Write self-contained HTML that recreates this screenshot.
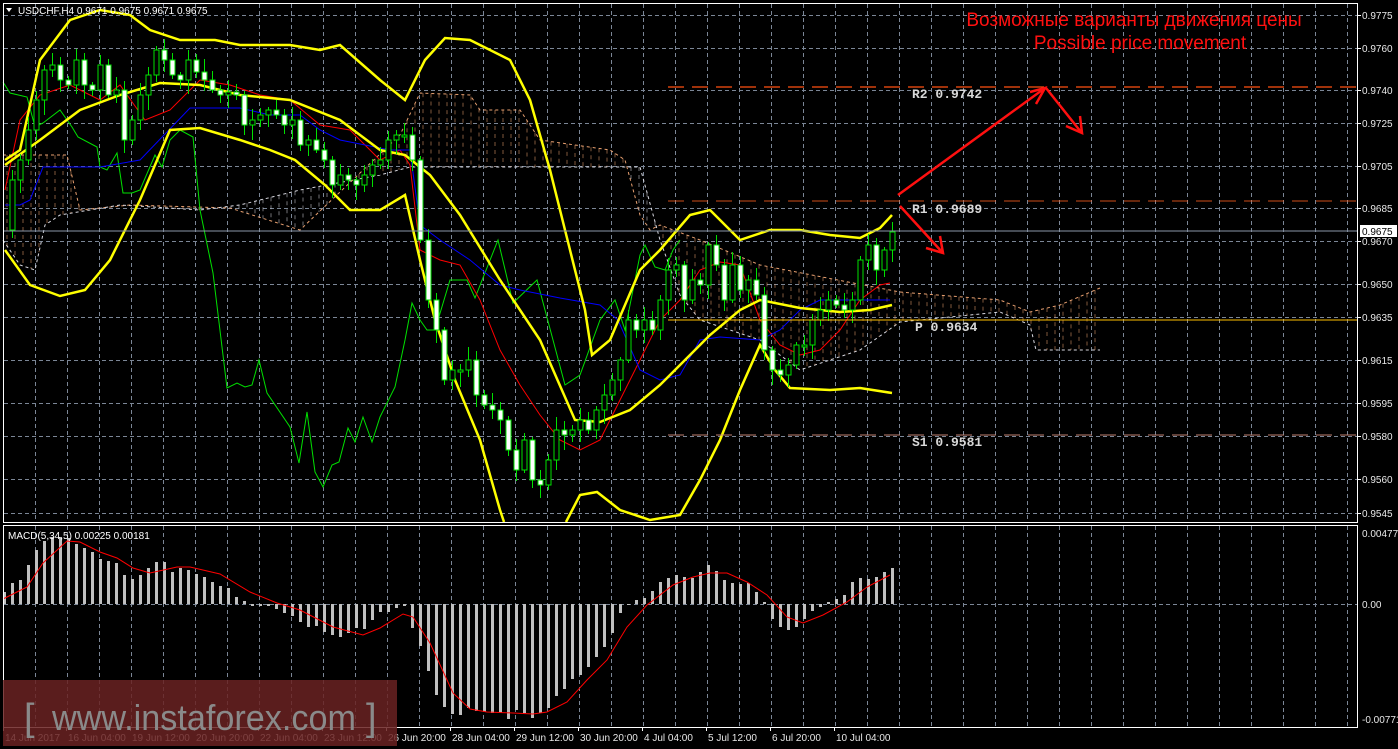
<!DOCTYPE html>
<html><head><meta charset="utf-8"><style>
html,body{margin:0;padding:0;background:#000;width:1398px;height:749px;overflow:hidden}
svg{display:block}
text{font-family:"Liberation Sans","DejaVu Sans",sans-serif}
text.mono{font-family:"Liberation Mono","DejaVu Sans Mono",monospace;font-weight:bold}
</style></head><body>
<svg id="s" width="1398" height="749" xmlns="http://www.w3.org/2000/svg">
<rect width="1398" height="749" fill="#000"/>
<g id="grid"></g>
<g id="cloud"></g>
<g id="lines"></g>
<g id="cand"></g>
<g id="macd"></g>
<line x1="668" y1="87" x2="1357" y2="87" stroke="#ff5010" stroke-width="1.3" stroke-dasharray="16,8"/>
<line x1="668" y1="201" x2="1357" y2="201" stroke="#ff6020" stroke-width="1" stroke-dasharray="16,8" opacity=".8"/>
<line x1="668" y1="320" x2="1357" y2="320" stroke="#ffc000" stroke-width="1"/>
<line x1="668" y1="435" x2="1357" y2="435" stroke="#c08070" stroke-width="1" stroke-dasharray="16,8"/>
<line x1="3" y1="231" x2="1357" y2="231" stroke="#8a96a8" stroke-width="1"/>
<g font-size="13" fill="#d8d8d8">
<text class="mono" x="912" y="98">R2 0.9742</text>
<text class="mono" x="912" y="213">R1 0.9689</text>
<text class="mono" x="915" y="331">P  0.9634</text>
<text class="mono" x="912" y="446">S1 0.9581</text>
</g>
<g stroke="#ff1010" stroke-width="2.5" fill="none">
<line x1="898" y1="195" x2="1045" y2="88"/>
<polyline points="1030,92 1045,88 1036,104"/>
<line x1="1046" y1="88" x2="1081" y2="132"/>
<polyline points="1080,116 1082,133 1066,126"/>
<line x1="900" y1="206" x2="942" y2="252"/>
<polyline points="940,236 943,253 926,248"/>
</g>
<text x="1134" y="26" font-size="19" fill="#ff1010" text-anchor="middle">Возможные варианты движения цены</text>
<text x="1140" y="49" font-size="19" fill="#ff1010" text-anchor="middle">Possible price movement</text>
<rect x="3.5" y="3.5" width="1354" height="519" fill="none" stroke="#fff" stroke-width="1"/>
<rect x="3.5" y="525.5" width="1354" height="202" fill="none" stroke="#fff" stroke-width="1"/>
<g id="axis" font-size="10" fill="#e8e8e8"></g>
<polygon points="6,8 12,8 9,12" fill="#fff"/>
<text x="18" y="14" font-size="10" fill="#fff">USDCHF,H4  0.9671 0.9675 0.9671 0.9675</text>
<text x="8" y="539" font-size="10" fill="#fff">MACD(5,34,5) 0.00225 0.00181</text>
<rect x="1360" y="225" width="37" height="12" fill="#fff"/>
<text x="1362" y="235" font-size="10" fill="#000">0.9675</text>
<rect x="3" y="680" width="394" height="66" fill="#6a2222" opacity=".85"/>
<text x="24" y="730" font-size="38" fill="#8a8a8a">[</text>
<text x="52" y="730" font-size="36" fill="#8a8a8a" textLength="304" lengthAdjust="spacingAndGlyphs">www.instaforex.com</text>
<text x="366" y="730" font-size="38" fill="#8a8a8a">]</text>
</svg>
<script>
var NS="http://www.w3.org/2000/svg";
function el(p,t,a){var e=document.createElementNS(NS,t);for(var k in a)e.setAttribute(k,a[k]);document.getElementById(p).appendChild(e);return e;}
function interp(pts,x){if(x<=pts[0][0])return pts[0][1];for(var i=1;i<pts.length;i++){if(x<=pts[i][0]){var a=pts[i-1],b=pts[i];return a[1]+(b[1]-a[1])*(x-a[0])/(b[0]-a[0]);}}return pts[pts.length-1][1];}
function pl(p,pts,c,w,d){var a={points:pts.map(function(q){return q.join(',')}).join(' '),fill:'none',stroke:c,'stroke-width':w};if(d)a['stroke-dasharray']=d;el(p,'polyline',a);}
var prices=[["0.9775",15],["0.9760",48],["0.9740",90],["0.9725",123],["0.9705",166],["0.9685",208],["0.9670",241],["0.9650",284],["0.9635",317],["0.9615",360],["0.9595",403],["0.9580",436],["0.9560",479],["0.9545",513]];
prices.forEach(function(p){if(p[1]>10)el('grid','line',{x1:4,x2:1357,y1:p[1]+.5,y2:p[1]+.5,stroke:'#7b8696','stroke-dasharray':'4,3','stroke-width':1});
var t=el('axis','text',{x:1362,y:p[1]+4});t.textContent=p[0];el('axis','line',{x1:1357,x2:1361,y1:p[1]+.5,y2:p[1]+.5,stroke:'#fff'});});
for(var x=35;x<1357;x+=32){el('grid','line',{x1:x+.5,x2:x+.5,y1:4,y2:522,stroke:'#7b8696','stroke-dasharray':'4,3'});el('grid','line',{x1:x+.5,x2:x+.5,y1:526,y2:727,stroke:'#7b8696','stroke-dasharray':'4,3'});}
el('grid','line',{x1:4,x2:1357,y1:604.5,y2:604.5,stroke:'#7b8696','stroke-dasharray':'4,3'});
[["0.00477",537],["0.00",608],["-0.00771",723]].forEach(function(p){var t=el('axis','text',{x:1362,y:p[1]});t.textContent=p[0];});
var tl=[["14 Jun 2017",3],["16 Jun 04:00",66],["19 Jun 12:00",130],["20 Jun 20:00",194],["22 Jun 04:00",258],["23 Jun 12:00",322],["26 Jun 20:00",386],["28 Jun 04:00",450],["29 Jun 12:00",514],["30 Jun 20:00",578],["4 Jul 04:00",642],["5 Jul 12:00",706],["6 Jul 20:00",770],["10 Jul 04:00",834]];
tl.forEach(function(p){var t=el('axis','text',{x:p[1]+2,y:741});t.textContent=p[0];el('axis','line',{x1:p[1]+.5,x2:p[1]+.5,y1:727,y2:731,stroke:'#fff'});});
var L1=[[3,155],[67,155],[80,210],[130,205],[230,208],[300,230],[400,135],[420,93],[470,95],[480,110],[520,110],[540,140],[610,150],[625,160],[640,215],[650,230],[660,225],[700,240],[760,265],[900,292],[1000,300],[1030,312],[1060,305],[1100,288]];
var L2=[[3,240],[20,265],[35,270],[45,225],[60,215],[90,210],[120,205],[200,210],[240,205],[300,190],[380,175],[410,167],[640,167],[660,240],[680,295],[700,320],[760,340],[800,370],[860,350],[900,322],[1000,312],[1030,325],[1036,350],[1100,350]];
pl('cloud',L1,'#e8a070',1,'3,3');pl('cloud',L2,'#d8d8e0',1,'3,3');
for(var x=7;x<=1100;x+=8){var a=interp(L1,x),b=interp(L2,x);el('cloud','line',{x1:x,x2:x,y1:Math.min(a,b),y2:Math.max(a,b),stroke:(a<b?'#e8a070':'#d0d0d8'),'stroke-dasharray':'4,4',opacity:.55});}
pl('lines',[[3,82],[10,93],[27,97],[35,127],[43,123],[60,110],[72,127],[78,137],[97,147],[100,167],[107,170],[117,153],[123,193],[132,193],[140,190],[155,155],[162,167],[170,140],[180,130],[193,137],[200,210],[213,273],[227,388],[237,383],[245,387],[252,385],[259,360],[267,393],[290,427],[299,463],[307,412],[315,472],[323,487],[332,465],[339,462],[348,428],[355,442],[363,417],[372,442],[380,417],[395,387],[405,340],[412,303],[420,320],[427,330],[435,330],[450,280],[467,280],[475,298],[498,240],[513,303],[537,280],[553,340],[565,385],[580,375],[600,320],[615,300],[625,330],[640,255],[645,245],[655,267],[665,270],[673,250],[680,240]],'#00e000',1);
pl('lines',[[5,190],[20,120],[40,95],[70,85],[100,100],[120,85],[145,120],[170,110],[200,80],[230,85],[260,95],[290,100],[320,125],[350,130],[380,160],[400,150],[410,165],[420,250],[440,260],[460,265],[480,300],[500,350],[520,385],[540,415],[560,440],[580,450],[600,440],[620,400],[640,360],[660,320],[680,300],[700,270],[720,262],[740,265],[760,320],[780,345],[800,355],[820,350],[840,330],[860,300],[880,285],[890,283]],'#ff0000',1);
pl('lines',[[5,205],[20,205],[30,200],[43,167],[100,167],[140,160],[190,108],[240,108],[270,115],[300,115],[320,130],[340,140],[390,150],[410,150],[420,225],[440,240],[470,260],[500,285],[520,290],[560,298],[600,305],[618,320],[640,370],[660,380],[680,375],[700,340],[720,337],[760,340],[780,330],[800,310],[820,300],[860,300],[890,300]],'#0000ff',1);
var Y='#ffff00';
pl('lines',[[5,160],[20,150],[40,60],[70,20],[100,10],[130,15],[150,30],[180,40],[215,40],[240,45],[290,45],[320,50],[340,45],[380,80],[405,100],[425,60],[445,38],[470,40],[510,60],[530,100],[550,170],[570,250],[585,310],[592,355],[610,340],[640,270],[660,250],[690,215],[710,210],[740,240],[770,230],[800,230],[830,235],[860,238],[880,228],[892,215]],Y,2.5);
pl('lines',[[5,165],[40,140],[80,110],[120,95],[160,83],[200,85],[240,95],[290,100],[340,120],[380,150],[405,155],[430,175],[460,215],[500,280],[540,340],[575,420],[600,422],[630,410],[660,385],[690,355],[710,335],[740,310],[760,300],[800,308],[840,312],[870,310],[892,305]],Y,2.5);
pl('lines',[[5,250],[30,285],[60,296],[85,290],[110,260],[140,200],[170,130],[200,128],[240,140],[270,150],[295,160],[325,185],[350,210],[380,210],[405,195],[420,260],[435,320],[455,380],[480,440],[500,510],[504,522]],Y,2.5);
pl('lines',[[566,522],[580,495],[597,492],[620,510],[650,520],[680,515],[700,480],[720,440],[740,390],[760,345],[775,370],[790,388],[830,390],[860,388],[892,393]],Y,2.5);
var C=[[3,230],[11,180],[19,160],[27,130],[35,100],[43,70],[51,65],[59,80],[67,85],[75,60],[83,85],[91,90],[99,65],[107,95],[115,90],[123,140],[131,120],[139,95],[147,75],[155,50],[163,60],[171,75],[179,80],[187,60],[195,72],[203,80],[211,90],[219,95],[227,92],[235,95],[243,125],[251,120],[259,115],[267,110],[275,115],[283,125],[291,120],[299,145],[307,140],[315,150],[323,160],[331,185],[339,175],[347,180],[355,185],[363,175],[371,165],[379,160],[387,140],[395,135],[403,135],[411,160],[419,240],[427,300],[435,330],[443,380],[451,370],[459,370],[467,360],[475,395],[483,405],[491,410],[499,420],[507,450],[515,470],[523,440],[531,480],[539,485],[547,460],[555,430],[563,435],[571,430],[579,420],[587,430],[595,410],[603,395],[611,380],[619,360],[627,320],[635,330],[643,320],[651,330],[659,300],[667,270],[675,265],[683,300],[691,280],[699,285],[707,245],[715,265],[723,300],[731,265],[739,290],[747,280],[755,295],[763,350],[771,370],[779,375],[787,365],[795,345],[803,345],[811,320],[819,310],[827,300],[835,305],[843,310],[851,300],[859,260],[867,245],[875,270],[883,250],[891,232]];
for(var i=1;i<C.length;i++){var x=C[i][0]+1,o=C[i-1][1],c=C[i][1];var t=Math.min(o,c),b=Math.max(o,c);if(b-t<2){b=t+2;}
var h=t-(3+(i*7)%11),l=b+(3+(i*5)%13);
el('cand','line',{x1:x+.5,x2:x+.5,y1:h,y2:l,stroke:'#00e000'});
el('cand','rect',{x:x-2,y:t,width:5,height:b-t,fill:(c>o?'#fff':'#000'),stroke:'#00e000','stroke-width':1});}
var H=[592,583,580,565,550,541,537,537,538,544,548,552,559,561,563,575,579,575,568,562,562,572,568,570,574,577,582,586,588,597,601,604,606,606,609,613,616,622,627,626,632,635,637,633,628,629,620,612,612,608,606,628,646,671,695,707,714,715,708,711,712,713,713,719,710,713,718,713,708,696,689,679,675,667,657,647,633,613,605,600,598,591,582,578,575,577,578,572,565,571,580,583,584,583,592,602,619,627,630,627,619,611,607,602,599,595,582,578,579,577,572,568];
for(var k=0;k<H.length;k++){var x=3+8*k,v=H[k];if(Math.abs(v-604)<1)v=v<604?603:606;el('macd','rect',{x:x,y:Math.min(v,604),width:3,height:Math.abs(v-604),fill:'#c0c0c0'});}
pl('macd',[[3,599],[27,587],[43,563],[67,541],[80,542],[100,552],[117,558],[133,568],[150,573],[177,567],[190,567],[220,574],[250,592],[277,603],[300,610],[333,627],[363,635],[380,628],[403,614],[413,617],[430,643],[453,693],[470,709],[487,712],[513,713],[533,714],[547,712],[567,702],[587,680],[607,660],[627,627],[647,605],[673,585],[693,577],[710,573],[727,573],[747,582],[767,595],[787,617],[803,623],[823,615],[847,602],[867,587],[890,575]],'#ff0000',1);
</script>
</body></html>
